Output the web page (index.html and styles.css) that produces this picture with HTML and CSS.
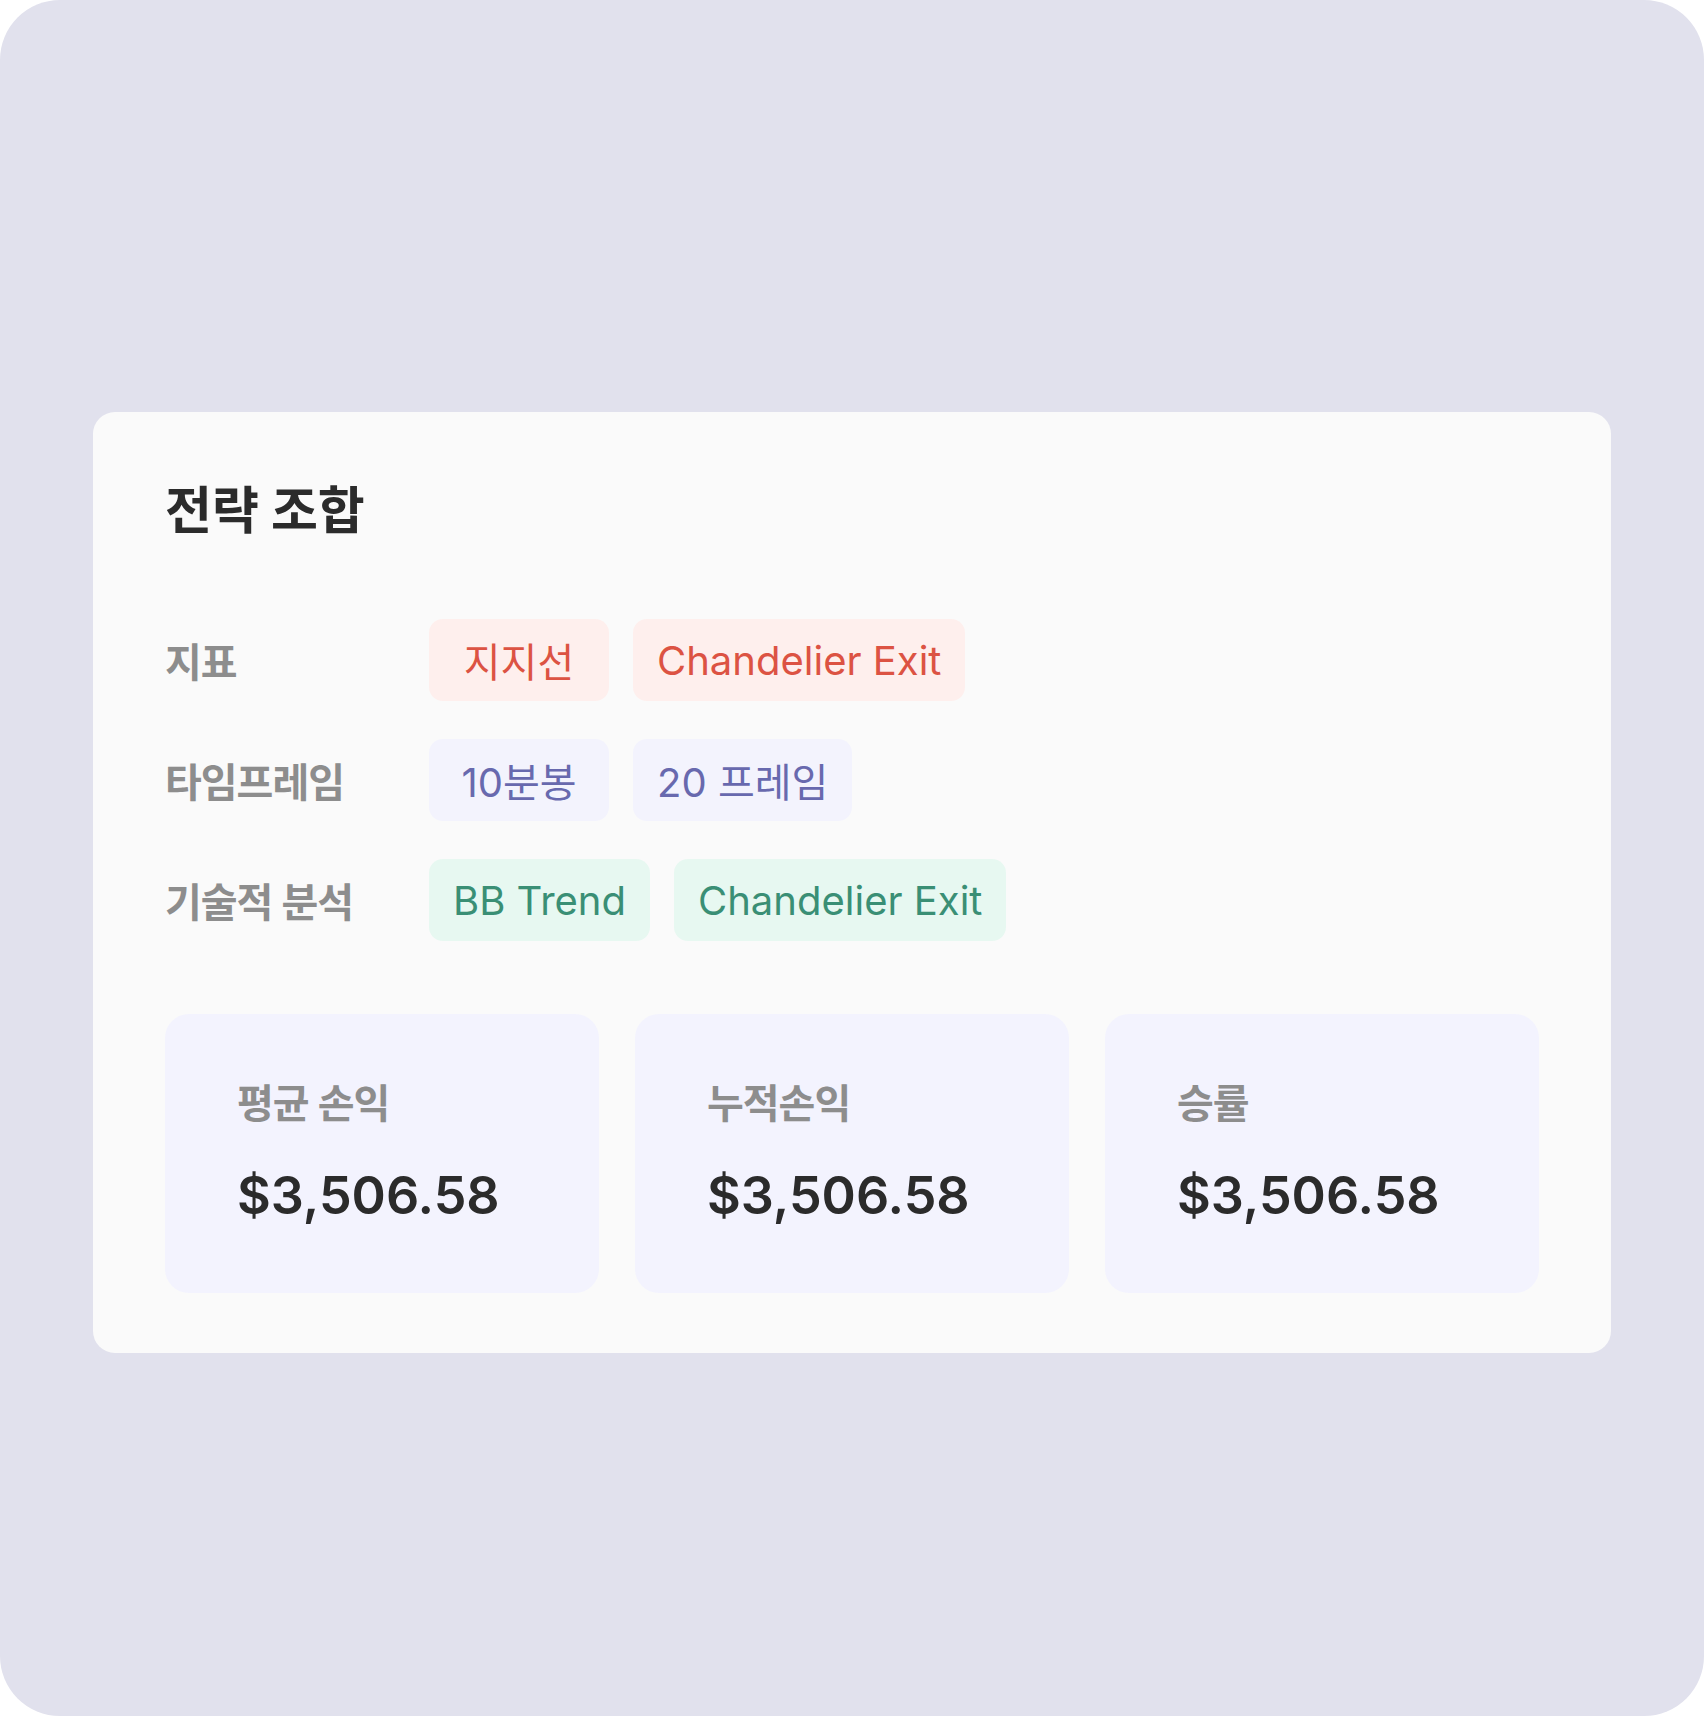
FILE: index.html
```html
<!DOCTYPE html>
<html lang="ko">
<head>
<meta charset="utf-8">
<meta name="viewport" content="width=device-width,initial-scale=1">
<title>전략 조합</title>
<link rel="stylesheet" href="styles.css">
</head>
<body>
<div class="frame">
  <div class="card">
    <h1>전략 조합</h1>

    <div class="rows">
      <div class="row">
        <span class="label">지표</span>
        <div class="chips">
          <span class="chip red min">지지선</span>
          <span class="chip red">Chandelier Exit</span>
        </div>
      </div>
      <div class="row">
        <span class="label">타임프레임</span>
        <div class="chips">
          <span class="chip blue min">10분봉</span>
          <span class="chip blue">20 프레임</span>
        </div>
      </div>
      <div class="row">
        <span class="label">기술적 분석</span>
        <div class="chips">
          <span class="chip green">BB Trend</span>
          <span class="chip green">Chandelier Exit</span>
        </div>
      </div>
    </div>

    <div class="stats">
      <div class="stat">
        <div class="stat-label">평균 손익</div>
        <div class="stat-value">$3,506.58</div>
      </div>
      <div class="stat">
        <div class="stat-label">누적손익</div>
        <div class="stat-value">$3,506.58</div>
      </div>
      <div class="stat">
        <div class="stat-label">승률</div>
        <div class="stat-value">$3,506.58</div>
      </div>
    </div>
  </div>
</div>
</body>
</html>
```

FILE: styles.css
```css
:root{--bg:#e1e1ed;--card:#fafafa;--txt:#2b2b2b;--muted:#8d8d8d;--stat:#f3f3fe}
*{box-sizing:border-box}
body{margin:0;background:#fff;font-family:Inter,"Noto Sans CJK KR",sans-serif;color:var(--txt)}
.frame{width:1704px;height:1716px;background:var(--bg);border-radius:60px;padding:412px 93px 0}
.card{background:var(--card);border-radius:22px;padding:70px 72px 60px}
h1{margin:0;font-size:51px;line-height:58px;font-weight:700;color:var(--txt)}
.rows{display:flex;flex-direction:column;gap:38px;margin-top:79px}
.row{display:flex;align-items:center}
.label{width:264px;flex:none;font-size:40px;font-weight:600;color:var(--muted);letter-spacing:-1px}
.chips{display:flex;gap:24px}
.chip{height:82px;padding:0 24px;border-radius:14px;font-size:40px;display:flex;align-items:center;justify-content:center;white-space:nowrap}
.chip.min{min-width:180px}
.chip.red{background:#feefed;color:#dc5343}
.chip.blue{background:#f3f3fd;color:#6869ae}
.chip.green{background:#e7f8f1;color:#3a8f75}
.stats{display:grid;grid-template-columns:repeat(3,1fr);gap:36px;margin-top:73px}
.stat{background:var(--stat);border-radius:24px;padding:66px 72px 65px}
.stat-label{font-size:40px;line-height:48px;font-weight:600;color:var(--muted);letter-spacing:-1px}
.stat-value{margin-top:36px;font-size:52px;line-height:64px;font-weight:600;color:var(--txt)}
```
